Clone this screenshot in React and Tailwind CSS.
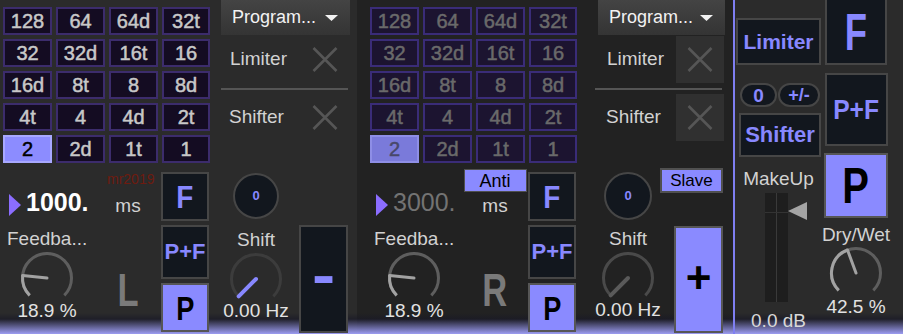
const GRID = ['128', '64', '64d', '32t', '32', '32d', '16t', '16', '16d', '8t', '8', '8d', '4t', '4', '4d', '2t', '2', '2d', '1t', '1']

function Cell({ label, sel, dim }) {
  let tone
  if (sel) tone = dim ? 'bg-[#7a7ada] border-[#8e8ee6] text-[#48486a]' : 'bg-[#8c8cff] border-[#a8a8ff] text-black'
  else tone = dim ? 'bg-[#1c1430] border-[#3a2c78] text-[#6a6a6a]' : 'bg-[#140c22] border-[#3c2c6c] text-[#c8c8c8]'
  return (
    <div className={`h-[28px] border-2 flex items-center justify-center text-[20px] leading-none [-webkit-text-stroke:0.5px_currentColor] ${tone}`}>
      {label}
    </div>
  )
}

function Grid({ dim }) {
  return (
    <div className="mt-[7px] grid grid-cols-[49px_49px_49px_48px] gap-[4px]">
      {GRID.map((g, i) => <Cell key={g} label={g} sel={i === 16} dim={dim} />)}
    </div>
  )
}

// 270° dial, value 0..1, needle from centre to the rim
function Knob({ value, track, fill, needle, needleW = 3 }) {
  const cx = 28, cy = 28, r = 24.5
  const pt = a => {
    const t = (a * Math.PI) / 180
    return [cx + r * Math.sin(t), cy - r * Math.cos(t)]
  }
  const [sx, sy] = pt(-135)
  const [ex, ey] = pt(135)
  const [vx, vy] = pt(-135 + value * 270)
  const large = value * 270 > 180 ? 1 : 0
  return (
    <svg width="56" height="50" viewBox="0 0 56 50" className="shrink-0">
      <path d={`M${sx} ${sy} A${r} ${r} 0 1 1 ${ex} ${ey}`} fill="none" stroke={track} strokeWidth="3" />
      {fill && value > 0 && (
        <path d={`M${sx} ${sy} A${r} ${r} 0 ${large} 1 ${vx} ${vy}`} fill="none" stroke={fill} strokeWidth="3" />
      )}
      <line x1={cx} y1={cy} x2={vx} y2={vy} stroke={needle} strokeWidth={needleW} strokeLinecap="round" />
    </svg>
  )
}

function XIcon() {
  return (
    <svg width="26" height="25" viewBox="0 0 26 25">
      <path d="M1.5 1L24.5 24M24.5 1L1.5 24" stroke="#565656" strokeWidth="2.6" fill="none" />
    </svg>
  )
}

function Btn({ lit, className = '', children }) {
  const tone = lit ? 'bg-[#8a8aff] text-black border-[#565656]' : 'bg-[#12171e] text-[#8888ff] border-[#464646]'
  return (
    <div className={`border-2 flex items-center justify-center font-bold leading-none shrink-0 ${tone} ${className}`}>
      {children}
    </div>
  )
}

function Channel({ right }) {
  const bg = right
    ? 'w-[376px] pl-[13px] bg-[linear-gradient(to_bottom,#222222_0px,#222222_313px,#1c1c25_319px,#9c9cf2_334px)]'
    : 'w-[357px] pl-[3px] bg-[linear-gradient(to_bottom,#2b2b2b_0px,#2b2b2b_313px,#1f1f28_319px,#9c9cf2_334px)]'
  return (
    <div className={`h-full flex shrink-0 ${bg}`}>
      {/* grid + delay time column */}
      <div className="w-[207px] flex flex-col">
        <Grid dim={right} />
        <div className="flex">
          <div className="w-[92px] flex flex-col">
            <div className="mt-[27px] h-[25px] flex items-start pl-[6px] gap-[5px]">
              <svg width="12" height="22" viewBox="0 0 12 22" className="mt-[4px] shrink-0">
                <polygon points="0,0 12,11 0,22" fill="#8b6dff" />
              </svg>
              <span className={`text-[25px] leading-none ${right ? 'text-[#737373]' : 'text-white font-bold'}`}>
                {right ? '3000.' : '1000.'}
              </span>
            </div>
            <div className="mt-[13px] pl-[4px] text-[19px] leading-[22px] text-[#d2d2d2] whitespace-nowrap">Feedba...</div>
            <div className="w-[88px] flex flex-col items-center">
              <Knob value={0.189} track="#5e5e5e" fill="#a2a2a2" needle="#a2a2a2" />
              <div className="text-[19px] leading-[22px] text-[#e2e2e2] whitespace-nowrap">18.9 %</div>
            </div>
          </div>

          <div className="w-[66px] flex flex-col items-center">
            {right ? (
              <div className="mt-[6px] h-[23px] w-[63px] shrink-0 bg-[#8a8aff] border border-[#505050] flex items-center justify-center text-[18px] leading-none text-black">
                Anti
              </div>
            ) : (
              <div className="mt-[8px] h-[16px] text-[14px] leading-[16px] text-[#6e1b10] self-start pl-[12px]">mr2019</div>
            )}
            <div className={`${right ? 'mt-[3px]' : 'mt-[8px]'} text-[19px] leading-[22px] text-[#d2d2d2]`}>ms</div>
            <div className="mt-[50px] text-[46px] leading-none font-bold text-[#7a7a7a] scale-x-75">{right ? 'R' : 'L'}</div>
          </div>

          <div className="w-[48px] flex flex-col">
            <Btn className="mt-[9px] h-[49px] text-[32px]"><span className="scale-x-[0.87]">F</span></Btn>
            <Btn className="mt-[4px] h-[54px] text-[22px]">P+F</Btn>
            <Btn lit className="mt-[4px] h-[49px] text-[34px]"><span className="scale-x-[0.8]">P</span></Btn>
          </div>
        </div>
      </div>

      {/* program / limiter / shifter column */}
      <div className={`flex flex-col ${right ? 'ml-[21px] w-[127px]' : 'ml-[11px] w-[129px]'}`}>
        <div className="h-[35px] shrink-0 bg-gradient-to-b from-[#444444] to-[#343434] flex items-center justify-between pl-[11px] pr-[12px] text-[18px] text-[#f2f2f2]">
          <span>Program...</span>
          <svg width="13" height="6" viewBox="0 0 13 6"><polygon points="0,0 13,0 6.5,6" fill="#f2f2f2" /></svg>
        </div>
        <div className="mt-[1px] h-[47px] flex items-center justify-between pr-[1px]">
          <span className="pl-[9px] text-[19px] text-[#d2d2d2]">Limiter</span>
          <div className={`w-[48px] h-[47px] flex items-center justify-center ${right ? 'bg-[#303030]' : ''}`}><XIcon /></div>
        </div>
        <div className={`mt-[5px] h-[2px] bg-[#555555] ${right ? '-ml-[3px] mr-[3px]' : 'mr-[2px]'}`} />
        <div className="mt-[4px] h-[47px] flex items-center justify-between pr-[1px]">
          <span className="pl-[8px] text-[19px] text-[#d2d2d2]">Shifter</span>
          <div className={`w-[48px] h-[47px] flex items-center justify-center ${right ? 'bg-[#303030]' : ''}`}><XIcon /></div>
        </div>

        <div className="flex">
          <div className={`${right ? 'w-[60px]' : 'w-[70px]'} flex flex-col items-center`}>
            <div className={`${right ? 'mt-[31px] w-[48px] h-[48px]' : 'mt-[32px] w-[46px] h-[46px]'} shrink-0 rounded-full border-2 border-[#464646] bg-[#12171e] flex items-center justify-center text-[13px] font-bold text-[#8888ff]`}>
              0
            </div>
            <div className={`${right ? 'mt-[8px]' : 'mt-[10px]'} text-[19px] leading-[22px] text-[#d2d2d2]`}>Shift</div>
            <Knob value={0} track={right ? '#4a4a4a' : '#3c3c3c'} needle={right ? '#5a5a5a' : '#8888ff'} needleW={4} />
            <div className="-mt-[1px] text-[19px] leading-[22px] text-[#e2e2e2] whitespace-nowrap">0.00 Hz</div>
          </div>
          <div className="flex-1 flex flex-col items-end pr-[2px]">
            {right && (
              <div className="mt-[27px] h-[25px] w-[63px] shrink-0 bg-[#8a8aff] border-2 border-[#505050] flex items-center justify-center text-[17px] leading-none text-black">
                Slave
              </div>
            )}
            <Btn lit={right} className={`${right ? 'mt-[33px] h-[107px]' : 'mt-[84px] h-[108px]'} w-[49px] ${right ? 'text-[44px]' : 'text-[58px]'}`}>
              <span className={right ? '-mt-[4px]' : '-mt-[8px] scale-x-[1.2]'}>{right ? '+' : '-'}</span>
            </Btn>
          </div>
        </div>
      </div>
    </div>
  )
}

function Master() {
  return (
    <div className="flex-1 h-full flex bg-[linear-gradient(to_bottom,#2b2b2b_0px,#2b2b2b_313px,#1f1f28_319px,#9c9cf2_334px)]">
      <div className="ml-[1px] w-[85px] flex flex-col">
        <Btn className="mt-[18px] h-[47px] w-[85px] text-[21px]">Limiter</Btn>
        <div className="mt-[18px] h-[24px] flex">
          <div className="ml-[4px] w-[37px] h-[24px] rounded-full border-2 border-[#464646] bg-[#12171e] flex items-center justify-center text-[19px] font-bold text-[#8888ff] leading-none">0</div>
          <div className="ml-[1px] w-[42px] h-[24px] rounded-full border-2 border-[#464646] bg-[#12171e] flex items-center justify-center text-[18px] font-bold text-[#8888ff] leading-none">+/-</div>
        </div>
        <Btn className="mt-[6px] ml-[3px] h-[44px] w-[82px] text-[22px]">Shifter</Btn>
        <div className="mt-[11px] text-center text-[19px] leading-[22px] text-[#d2d2d2]">MakeUp</div>
        <div className="mt-[3px] ml-[29px] flex">
          <div className="relative w-[23px] h-[109px] flex bg-[#1c1c1c]">
            <div className="w-[11px] h-full bg-[#1e1e1e]" />
            <div className="w-[1px] h-full bg-[#3a3a3a]" />
            <div className="flex-1 h-full bg-[#1e1e1e]" />
            <div className="absolute left-0 right-0 top-[19px] h-[1px] bg-[#333333]" />
          </div>
          <svg width="19" height="18" viewBox="0 0 19 18" className="mt-[9px]">
            <polygon points="0,9 19,0 19,18" fill="#a4a4a4" />
          </svg>
        </div>
        <div className="mt-[8px] text-center text-[19px] leading-[22px] text-[#d8d8d8]">0.0 dB</div>
      </div>

      <div className="ml-[3px] w-[64px] flex flex-col items-center">
        <Btn className="-mt-[2px] h-[67px] w-[62px] text-[52px]"><span className="scale-x-[0.7]">F</span></Btn>
        <Btn className="mt-[8px] h-[73px] w-[63px] text-[28px]"><span className="scale-x-[0.88]">P+F</span></Btn>
        <Btn lit className="mt-[7px] h-[65px] w-[64px] text-[50px]"><span className="scale-x-[0.8]">P</span></Btn>
        <div className="mt-[6px] text-[19px] leading-[22px] text-[#d2d2d2] whitespace-nowrap">Dry/Wet</div>
        <div className="-mt-[1px]">
          <Knob value={0.425} track="#5e5e5e" fill="#a2a2a2" needle="#a2a2a2" />
        </div>
        <div className="mt-[1px] text-[19px] leading-[22px] text-[#e2e2e2] whitespace-nowrap">42.5 %</div>
      </div>
    </div>
  )
}

export default function App() {
  return (
    <div className="w-[903px] h-[334px] overflow-hidden flex font-['Liberation_Sans',Arial,sans-serif] select-none">
      <Channel />
      <Channel right />
      <div className="w-[2px] h-full shrink-0 bg-[#7f7ff2]" />
      <Master />
    </div>
  )
}
